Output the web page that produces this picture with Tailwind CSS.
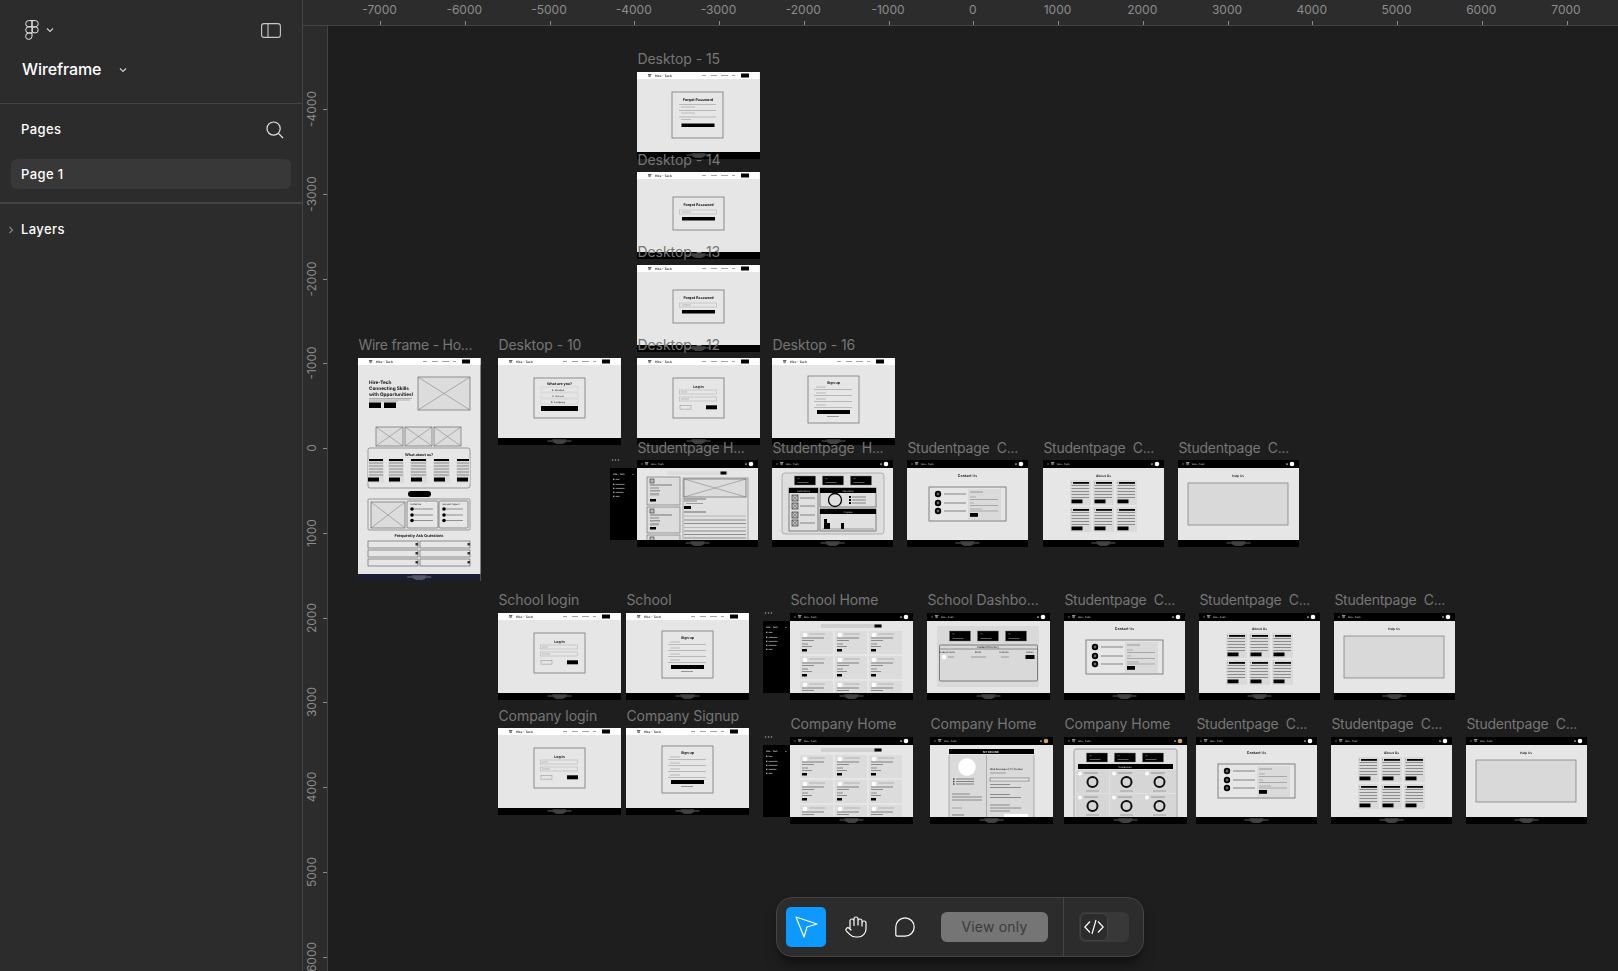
<!DOCTYPE html>
<html lang="en">
<head>
    <meta charset="UTF-8">
    <meta name="viewport" content="width=device-width, initial-scale=1.0">
    <title>Wireframe - Figma</title>
    <script src="https://cdn.jsdelivr.net/npm/@tailwindcss/browser@4"></script>
</head>
<body class="bg-[#1e1e1e]">
<div class="relative flex h-[971px] w-[1618px] overflow-hidden bg-[#1e1e1e] font-['Inter',sans-serif] text-white">

  <!-- left panel -->
  <aside class="flex h-full w-[303px] shrink-0 flex-col border-r border-[#444444] bg-[#2c2c2c]">
    <div class="h-[104px] shrink-0 border-b border-[#444444] pl-[22px]">
      <div class="flex h-[60px] items-center pr-[21px]">
        <svg class="ml-[3px] h-5 w-[14px]" viewBox="0 0 14 20" fill="none" stroke="#e6e6e6" stroke-width="1">
          <path d="M7 .6H3.8a3.1 3.1 0 0 0 0 6.2H7z"/>
          <path d="M7 .6h3.2a3.1 3.1 0 0 1 0 6.2H7z"/>
          <path d="M7 6.8H3.8a3.1 3.1 0 0 0 0 6.2H7z"/>
          <circle cx="10.1" cy="9.9" r="3.1"/>
          <path d="M7 13H3.8A3.2 3.2 0 1 0 7 16.2z"/>
        </svg>
        <svg class="ml-[7px] h-2 w-2" viewBox="0 0 8 8" fill="none" stroke="#d0d0d0" stroke-width="1.1"><path d="M1 2.5 4 5.5 7 2.5"/></svg>
        <svg class="ml-auto h-[15px] w-5" viewBox="0 0 20 15" fill="none" stroke="#c8c8c8" stroke-width="1.1"><rect x=".6" y=".6" width="18.8" height="13.8" rx="2.5"/><path d="M7 .6v13.8"/></svg>
      </div>
      <div class="flex items-center">
        <span class="text-base/[19px] font-medium tracking-[-0.1px]">Wireframe</span>
        <svg class="ml-[18px] h-2 w-2" viewBox="0 0 8 8" fill="none" stroke="#d0d0d0" stroke-width="1.1"><path d="M1 2.5 4 5.5 7 2.5"/></svg>
      </div>
    </div>
    <div class="h-[100px] shrink-0 border-b-2 border-[#444444] px-[11px]">
      <div class="flex h-[50px] items-center justify-between pl-[10px] pr-[7px] pt-[2px]">
        <span class="text-[13px] font-medium tracking-[0.4px]">Pages</span>
        <svg class="h-[18px] w-[18px]" viewBox="0 0 18 18" fill="none" stroke="#e6e6e6" stroke-width="1.2"><circle cx="7.6" cy="7.6" r="6.6"/><path d="M12.4 12.4 17 17"/></svg>
      </div>
      <div class="mt-[5px] flex h-[30px] items-center rounded-md bg-[#383838] pl-[10px] pt-[2px] text-[13px] font-medium tracking-[0.4px]">Page 1</div>
    </div>
    <div class="flex h-[50px] items-center pt-[2px]">
      <svg class="ml-2 h-2 w-[6px]" viewBox="0 0 6 8" fill="none" stroke="#8a8a8a" stroke-width="1.1"><path d="M1.5 1 4.5 4 1.5 7"/></svg>
      <span class="ml-[7px] text-[13px] font-medium tracking-[0.4px]">Layers</span>
    </div>
  </aside>

  <!-- rulers + canvas -->
  <main class="flex min-w-0 flex-1 flex-col">
    <div id="rulerTop" class="relative h-[26px] shrink-0 border-b border-[#444444] bg-[#2c2c2c]"></div>
    <div class="flex min-h-0 flex-1">
      <div id="rulerLeft" class="relative w-[25px] shrink-0 border-r border-[#444444] bg-[#2c2c2c]"></div>
      <div id="canvas" class="relative flex-1 bg-[#1e1e1e]"></div>
    </div>
  </main>

  <!-- bottom toolbar -->
  <div class="absolute left-[776px] top-[897px] flex h-[60px] w-[368px] items-center rounded-[16px] border border-[#454545] bg-[#2c2c2c] pl-[9px] shadow-lg shadow-black/40">
    <div class="flex h-10 w-10 items-center justify-center rounded-[5px] bg-[#0d99ff]">
      <svg class="h-10 w-10" viewBox="0 0 40 40" fill="none" stroke="#fff" stroke-width="1.2" stroke-linejoin="round"><path d="M10 10 31 17 21 20 18 30z"/></svg>
    </div>
    <svg class="ml-[18px] h-6 w-6" viewBox="0 0 24 24" fill="none" stroke="#fff" stroke-width="1.2" stroke-linecap="round" stroke-linejoin="round"><path d="M18 11V6a2 2 0 0 0-2-2 2 2 0 0 0-2 2M14 10V4a2 2 0 0 0-2-2 2 2 0 0 0-2 2v2M10 10.5V6a2 2 0 0 0-2-2 2 2 0 0 0-2 2v8M18 8a2 2 0 1 1 4 0v6a8 8 0 0 1-8 8h-2c-2.8 0-4.5-.86-5.99-2.34l-3.6-3.6a2 2 0 0 1 2.83-2.82L7 15"/></svg>
    <svg class="ml-[27px] h-5 w-5" viewBox="0 0 20 20" fill="none" stroke="#fff" stroke-width="1.2"><path d="M.8 10a9.2 9.2 0 1 1 9.2 9.2H2.3a1.5 1.5 0 0 1-1.5-1.5z"/></svg>
    <div class="ml-[26px] flex h-[30px] w-[107px] items-center justify-center rounded-md bg-[#757575] text-sm tracking-[0.2px] text-[#3b3b3b]">View only</div>
    <div class="ml-[15px] h-full w-px bg-[#444444]"></div>
    <div class="ml-[15px] flex h-[30px] w-[50px] items-center rounded-md bg-[#383838] pl-px">
      <div class="flex h-[28px] w-[28px] items-center justify-center rounded-md border border-[#444444] bg-[#2c2c2c]">
        <svg class="h-4 w-5" viewBox="0 0 20 16" fill="none" stroke="#fff" stroke-width="1.2"><path d="M6 2.5.8 8 6 13.5M12 1 8 15M14 2.5 19.2 8 14 13.5"/></svg>
      </div>
    </div>
  </div>
</div>

<script>
  // ruler ticks, 84.75px per 1000 units
  const rulerTop = document.getElementById('rulerTop');
  const rulerLeft = document.getElementById('rulerLeft');
  const canvas = document.getElementById('canvas');
  const OX = 303 + 25, OY = 26;

  for (let i = -7; i <= 7; i++) {
    const x = 380 + (i + 7) * 84.75 - 303;
    rulerTop.innerHTML += `<span class="absolute top-[2px] w-12 -translate-x-1/2 text-center text-xs/[15px] text-[#8c8c8c]" style="left:${x - 0.5}px">${i * 1000}</span>
      <span class="absolute bottom-0 h-[4px] w-px bg-[#8c8c8c]" style="left:${x}px"></span>`;
  }
  for (let i = -4; i <= 6; i++) {
    const y = 109 + (i + 4) * 84.75 - 26;
    rulerLeft.innerHTML += `<span class="absolute left-0 w-[18px] -translate-y-1/2 text-center text-xs/[18px] text-[#8c8c8c] [writing-mode:vertical-rl] rotate-180" style="top:${y}px">${i * 1000}</span>
      <span class="absolute right-0 h-px w-[4px] bg-[#8c8c8c]" style="top:${y}px"></span>`;
  }

  // svg bits for the small frame previews
  const r = (x, y, w, h, f = '#000', rx = 0) => `<rect x="${x}" y="${y}" width="${w}" height="${h}" fill="${f}" rx="${rx}"/>`;
  const box = (x, y, w, h, f = '#e0e0e0', s = '#777', rx = 0, sw = .7) => `<rect x="${x}" y="${y}" width="${w}" height="${h}" fill="${f}" stroke="${s}" stroke-width="${sw}" rx="${rx}"/>`;
  const t = (x, y, s, size = 2.6, a = 'middle', f = '#111', w = 600) => `<text x="${x}" y="${y}" font-family="Inter" font-size="${size}" font-weight="${w}" text-anchor="${a}" fill="${f}" text-rendering="geometricPrecision">${s}</text>`;
  const ln = (x1, y1, x2, y2, c = '#666', w = .6) => `<line x1="${x1}" y1="${y1}" x2="${x2}" y2="${y2}" stroke="${c}" stroke-width="${w}"/>`;
  const cross = (x, y, w, h) => box(x, y, w, h, '#dcdcdc', '#6a6a6a') + ln(x, y, x + w, y + h, '#777', .5) + ln(x + w, y, x, y + h, '#777', .5);
  const circ = (x, y, rad, f = '#000', s = 'none', sw = 0) => `<circle cx="${x}" cy="${y}" r="${rad}" fill="${f}" stroke="${s}" stroke-width="${sw}"/>`;

  const logo = (x, c) => r(x, 2.2, 3.4, .7, c) + r(x + .6, 3, .5, 1.8, c) + r(x + 1.4, 3, .5, 2.2, c) + r(x + 2.2, 3, .5, 1.8, c);
  const foot = (w, y = 80, h = 7, c = '#000') => r(0, y, w, h, c) + ln(w / 2 - 12, y + 3, w / 2 + 12, y + 3, '#eee', .4) + ln(w / 2 - 7, y + 1.8, w / 2 + 7, y + 1.8, '#ccc', .35) + ln(w / 2 - 6, y + 4.2, w / 2 + 6, y + 4.2, '#ddd', .4) + ln(w / 2 - 4, y + 5.4, w / 2 + 4, y + 5.4, '#ccc', .35);
  const navL = () => r(0, 0, 122.5, 7, '#fff') + logo(11, '#222') + t(18, 4.7, 'Hire - Tech', 3.2, 'start')
    + ln(65, 3.5, 69, 3.5) + ln(74, 3.5, 80, 3.5) + ln(84, 3.5, 91, 3.5) + ln(95, 3.5, 98, 3.5) + r(104, 1.5, 8, 4, '#000');
  const navD = (w, face = '#fff') => r(0, 0, w, 8, '#000') + ln(4, 4, 6, 4, '#ccc', .5) + logo(8, '#ccc') + t(14, 4.9, 'Hire - Tech', 2.4, 'start', '#ccc', 500)
    + ln(w - 12, 3.2, w - 12, 5, '#ccc', 1.2) + circ(w - 7, 4, 2.3, face);
  const base = (w, h = 87) => r(0, 0, w, h, '#e6e6e6');

  const dialog = (x, y, w, h) => box(x, y, w, h, '#e6e6e6', '#777', 0, .8);
  const forgot15 = () => base(123) + navL() + dialog(35, 20, 51, 46) + t(61, 28.5, 'Forgot Password', 3.7, 'middle', '#111', 700)
    + ln(42, 32.5, 79, 32.5, '#999') + ln(44, 35, 58, 35, '#777', .4) + ln(42, 38.5, 79, 38.5, '#999') + ln(44, 41, 58, 41, '#777', .4) + ln(42, 45, 79, 45, '#999') + ln(44, 47.5, 54, 47.5, '#777', .4) + r(44.5, 51.5, 33, 3.5) + foot(123);
  const forgot1 = () => base(123) + navL() + dialog(36, 25, 51, 33) + t(61.5, 33.5, 'Forgot Password', 3.7, 'middle', '#111', 700)
    + box(42.5, 38, 37, 4, '#e6e6e6', '#aaa', 0, .5) + ln(45, 40, 54, 40, '#777', .4) + r(45, 45, 33, 3.5) + foot(123);
  const login = () => base(123) + navL() + dialog(36, 20, 51, 40) + t(61.5, 30.3, 'Log In', 3.6, 'middle', '#111', 700)
    + box(42.5, 32, 37, 4, '#e6e6e6', '#aaa', 0, .5) + ln(44, 34, 50, 34, '#777', .4) + box(42.5, 39, 37, 4, '#e6e6e6', '#aaa', 0, .5) + ln(44, 41, 52, 41, '#777', .4)
    + box(43, 47.5, 11, 3.6, '#e6e6e6', '#777', 0, .4) + r(69, 47.3, 11, 4) + foot(123);
  const signup = () => base(123) + navL() + dialog(36, 18, 51, 47) + t(61.5, 25.8, 'Sign up', 3.6, 'middle', '#111', 700)
    + [28, 34, 40, 46].map(y => ln(42, y + 3.5, 80, y + 3.5, '#999') + ln(44, y + 1, 54, y + 1, '#777', .4)).join('')
    + r(45, 52, 33, 4) + ln(55, 58.5, 67, 58.5, '#444', .5) + foot(123);
  const what = () => base(123) + navL() + dialog(36, 20, 51, 40) + t(61.5, 26.7, 'What are you?', 3.6, 'middle', '#111', 700)
    + [29, 35, 41].map((y, i) => box(43, y, 37, 5, '#e6e6e6', '#bbb', 0, .3) + t(60, y + 3.5, ['A. Student', 'C. School', 'D. Company'][i], 2.5, 'middle', '#222', 500)).join('')
    + r(43, 48, 37, 5) + foot(123);

  const home = () => {
    let s = r(0, 0, 122.5, 223, '#e6e6e6') + navL() + t(11, 26, 'Hire-Tech', 4.7, 'start', '#111', 700) + t(11, 32, 'Connecting Skills', 4.7, 'start', '#111', 700) + t(11, 38, 'with Opportunities!', 4.7, 'start', '#111', 700)
      + ln(11, 40.5, 54, 40.5, '#777', .5) + ln(11, 42, 52, 42, '#777', .5) + ln(11, 43.3, 40, 43.3, '#888', .4) + r(11, 44.5, 12, 5.5) + r(26, 44.5, 12, 5.5)
      + cross(60, 19, 52, 33) + cross(18, 69, 27, 19) + cross(47, 69, 27, 19) + cross(76, 69, 27, 19) + box(10, 90, 102, 40, '#e6e6e6', '#777', 2) + t(61, 97.5, 'What about us?', 3.7, 'middle', '#111', 700);
    [[10, 16], [30, 16], [52, 17], [75, 17], [98, 14]].forEach(([x, w]) => {
      s += r(x, 101, w, 24, '#dcdcdc') + r(x + 1, 101, w - 2, 2);
      [105, 108, 111, 114, 117].forEach(y => s += ln(x + 1, y, x + w - 1, y, '#555', .6));
      s += r(x + (x == 10 ? 0 : 1), 119.5, 11, 4);
    });
    s += r(50, 133, 23, 6, '#000', 3) + box(10, 141, 102, 31, '#e6e6e6', '#777', 1) + cross(13, 144, 34, 26);
    [[49, 31, 'Contact Us'], [81, 29, 'Help and Support']].forEach(([x, w, l]) => {
      s += box(x, 143, w, 27, '#e6e6e6', '#666', 1) + t(x + 3, 147, l, 2.1, 'start', '#222', 500);
      [151, 157, 162.5].forEach(y => s += circ(x + 5, y, 1.8) + ln(x + 7, y, x + w - 5, y, '#555', .6));
    });
    s += t(61, 178.8, 'Frequently Ask Questions', 3.9, 'middle', '#111', 700);
    [183, 192, 201].forEach(y => [[10, 50], [62, 50]].forEach(([x, w]) => s += box(x, y, w, 7, '#e6e6e6', '#666') + r(x + w - 2.5, y + 2, 2.5, 2.5, '#333')));
    return s + foot(122.5, 216, 7, '#1c1e33');
  };

  const studentFeed = () => {
    let s = base(121) + navD(121) + box(30, 11, 61, 4, '#dcdcdc', 'none', 0, 0) + r(83.5, 11.5, 6, 3);
    [[10, 17, 28], [10, 47, 26], [10, 75, 8]].forEach(([x, y, h]) => {
      s += box(x, y, 33, h, '#dcdcdc', '#777') + box(x + 3, y + 2, 4, 4, '#bbb', '#333', 0, .6);
      if (h > 10) {
        s += ln(x + 3, y + 8, x + 25, y + 8, '#333', .6) + ln(x + 3, y + 11, x + 12, y + 11, '#555', .6) + r(x + 3, y + 13, 10, 1.5, '#999') + r(x + 3, y + 16, 9, 2.5, '#aaa') + r(x + 3, y + h - 6, 6, 2.5);
      }
    });
    s += box(46, 18, 65, 63, '#e0e0e0', '#888') + cross(47, 19, 62, 18) + ln(47, 39, 69, 39, '#555', .8) + ln(47, 41, 60, 41, '#555', .6) + ln(49, 43.5, 66, 43.5, '#555', .5) + r(47, 46, 7, 3) + ln(47, 52, 69, 52, '#333', .7);
    [56, 60, 63.5, 67.5, 71, 74.5, 78].forEach(y => s += ln(47, y, 109, y, y == 56 || y == 67.5 ? '#999' : '#555', .6));
    return s + foot(121);
  };
  const qr = (x, y) => box(x, y, 6, 6, '#bbb', '#333', 0, .7) + ln(x, y, x + 6, y + 6, '#444', .4) + ln(x + 6, y, x, y + 6, '#444', .4);
  const chips = (y, h) => [22.5, 50.5, 78.5].map(x => box(x, y, 21, h, '#000', '#777', 0, .4) + r(x + 3, y + 2.5, 2, .6, '#888') + r(x + 3, y + h - 3, 11, .6, '#999')).join('');
  const studentDash = () => {
    let s = base(121) + navD(121) + box(10, 13, 102, 61, '#dedede', '#999', 3) + chips(16, 9);
    s += box(17, 28, 29, 43, '#e0e0e0', '#555') + r(17, 28, 29, 5) + t(31.5, 31.5, 'Notifications', 2.1, 'middle', '#bbb', 500);
    [35, 43, 52, 60].forEach(y => s += qr(20, y) + ln(28, y + 3, 43, y + 3, '#444', .6));
    s += box(48, 28, 56, 19, '#e0e0e0', '#555') + r(48, 28, 56, 5) + t(76, 31.5, 'Attendance', 2.1, 'middle', '#bbb', 500) + circ(63, 40, 6.5, 'none', '#000', 1.3);
    [37, 40, 43].forEach(y => s += r(77, y - 1, 2, 2) + ln(80, y, 94, y, '#444', .6));
    s += box(48, 49, 56, 22, '#e0e0e0', '#555') + r(48, 49, 56, 5) + t(76, 52.5, 'Progress', 2.1, 'middle', '#bbb', 500)
      + r(52, 59, 3, 10) + r(55, 63, 3, 6) + r(69, 63, 3, 6) + ln(50, 69, 102, 69, '#555', .5);
    return s + foot(121);
  };
  const contact = () => {
    let s = base(121) + navD(121) + t(60.5, 17, 'Contact Us', 3.6) + box(22, 27, 77, 34, '#e6e6e6', '#777', 0, .9) + r(61, 29, 33, 31, '#dadada');
    [34, 43, 51].forEach(y => s += circ(31, y, 3.2) + circ(31, y, 1.4, '#666') + ln(37, y, 59, y, '#444', .6));
    s += ln(63, 32, 76, 32, '#555', .5) + ln(63, 37, 69, 37, '#666', .4) + ln(63, 39.5, 91, 39.5, '#777', .5) + ln(63, 43, 67, 43, '#666', .4) + ln(63, 45.5, 91, 45.5, '#777', .5) + ln(63, 49, 75, 49, '#666', .4) + ln(63, 51, 91, 51, '#777', .5) + r(63, 53, 8, 3.8);
    return s + foot(121);
  };
  const about = () => {
    let s = base(121) + navD(121) + t(60.5, 17, 'About Us', 3.4);
    [20, 47].forEach(y => [27, 50, 73].forEach(x => {
      s += r(x, y, 21, 25, '#dadada') + r(x + 3, y + 2, 16, 1.8) + ln(x + 1, y + 2.8, x + 2, y + 2.8, '#333', .5);
      [5.5, 8.5, 11.5, 14.5, 17.5].forEach(d => s += ln(x + 1.5, y + d, x + 19, y + d, '#555', .6));
      s += r(x + 1.5, y + 19.5, 11, 3.8);
    }));
    return s + foot(121);
  };
  const help = () => base(121) + navD(121) + t(60, 17, 'Help Us', 3.2) + box(10, 23, 100, 42, '#d9d9d9', '#777', 0, .7) + foot(121);

  const orgHome = () => {
    let s = base(123) + navD(123) + r(31, 11, 61, 4, '#d0d0d0') + r(84.5, 11.5, 7, 3);
    [18, 43, 68].forEach(y => [[10, 33], [45, 32], [79, 33]].forEach(([x, w]) => {
      s += r(x, y, w, 23, '#dcdcdc') + circ(x + 5, y + 4, 2.3, '#fff') + ln(x + 9, y + 3, x + 25, y + 3, '#888', .5) + ln(x + 2, y + 7, x + 24, y + 7, '#444', .6)
        + ln(x + 2, y + 9.5, x + 14, y + 9.5, '#555', .6) + ln(x + 2, y + 13, x + 8, y + 13, '#555', .6) + ln(x + 2, y + 15.5, x + 12, y + 15.5, '#555', .6) + r(x + 2, y + 18, 5, 2.5);
    }));
    return s + foot(123);
  };
  const schoolDash = () => {
    let s = base(123) + navD(123) + r(10, 13, 102, 61, '#d9d9d9', 1) + chips(18, 10) + box(12.5, 32, 98, 36, '#d9d9d9', '#555', 1);
    s += ln(12.5, 36, 110.5, 36, '#555', .6) + t(61, 35.3, 'Student Directory', 2.6, 'middle', '#222', 500);
    [[20, 'Student name'], [51, 'Email'], [77, 'Institute'], [103, 'Action']].forEach(([x, l]) => s += t(x, 40, l, 2.4, 'middle', '#333', 500));
    s += circ(17, 44, 2.3, '#fff') + ln(21, 44, 27, 44, '#555', .5) + ln(44, 44, 59, 44, '#555', .5) + ln(74, 44, 82, 44, '#555', .5) + r(98.5, 42, 9, 4);
    return s + foot(123);
  };
  const resume = () => {
    let s = base(123) + navD(123, '#d0a060') + r(19, 12, 85, 5) + t(61, 15.7, 'MY RESUME', 2.6, 'middle', '#ddd', 700) + r(19, 18, 37, 62, '#dadada') + r(57, 18, 47, 62, '#dadada') + ln(56.5, 18, 56.5, 80, '#777', .5) + ln(19, 18, 19, 80, '#888', .6) + ln(104, 18, 104, 80, '#888', .6) + circ(37, 30, 8.7, '#fff');
    [42, 44.5, 47].forEach(y => s += r(23, y - .7, 1.5, 1.5, '#444') + ln(26, y, 44, y, '#444', .6));
    [58, 61, 64].forEach((y, i) => s += ln(22, y - 1, i ? 52 : 40, y - 1, '#555', .6));
    s += ln(22, 71, 32, 71, '#666', .5) + ln(22, 78, 34, 78, '#444', .6);
    s += t(60, 32.5, 'Web Developer | IT | Fresher', 2.4, 'start', '#222', 600) + ln(60, 36, 76, 36, '#555', .5) + box(60, 41, 39, 3, '#e6e6e6', '#555', 0, .5);
    [[47.5, 20], [50.5, 31], [57.5, 20], [60.5, 31], [68, 20], [71, 31], [74, 20]].forEach(([y, w]) => s += ln(60, y, 60 + w, y, '#555', .6));
    s += r(74, 77, 24, 3, '#fff');
    return s + foot(123);
  };
  const companyDash = () => {
    let s = base(123) + navD(123, '#d0a060') + box(10, 12, 103, 70, '#e0e0e0', '#888', 2) + chips(16, 9) + r(14, 27, 95, 5) + t(61, 30.7, 'Companies', 2.4, 'middle', '#ccc', 500);
    [33, 57].forEach(y => [12, 46, 79].forEach(x => {
      s += r(x, y, 33, 23, '#d6d6d6') + circ(x + 4, y + 3.5, 2, '#fff') + ln(x + 8, y + 3, x + 22, y + 3, '#666', .6) + circ(x + 16.5, y + 12, 5, 'none', '#111', 2) + ln(x + 10, y + 21, x + 23, y + 21, '#666', .5);
    }));
    return s + foot(123);
  };
  const side = () => {
    let s = circ(2.5, 2, .8, '#999') + circ(5.5, 2, .8, '#999') + circ(8.5, 2, .8, '#999') + r(0, 10, 27, 72);
    s += t(3, 17, 'Hire - Tech', 2.2, 'start', '#ddd', 600) + ln(22, 16.4, 24, 16.4, '#bbb', .5);
    [22, 27, 31, 35, 39].forEach((y, i) => s += r(3, y - 1.3, 1.4, 1.4, '#aaa') + ln(5.5, y - .6, 5.5 + [4, 9, 9, 8, 4][i], y - .6, '#bbb', .7));
    return s;
  };

  // [label, x, y, width, height, drawing, label centre y]
  const frames = [
    ['Wire frame - Ho...', 358, 358, 122.5, 223, home, 345],
    ['Desktop - 10', 498, 358, 122.5, 87, what, 345],
    ['Desktop - 15', 637, 72, 122.5, 87, forgot15, 59],
    ['Desktop - 14', 637, 172, 122.5, 87, forgot1, 160],
    ['Desktop - 13', 637, 265, 122.5, 87, forgot1, 252],
    ['Desktop - 12', 637, 358, 122.5, 87, login, 345],
    ['Desktop - 16', 772, 358, 122.5, 87, signup, 345],
    [null, 610, 458, 27, 82, side],
    ['Studentpage H...', 637, 460, 121, 87, studentFeed, 448],
    ['Studentpage  H...', 772, 460, 121, 87, studentDash, 448],
    ['Studentpage  C...', 907, 460, 121, 87, contact, 448],
    ['Studentpage  C...', 1043, 460, 121, 87, about, 448],
    ['Studentpage  C...', 1178, 460, 121, 87, help, 448],
    ['School login', 498, 613, 122.5, 87, login, 600],
    ['School', 626, 613, 122.5, 87, signup, 600],
    [null, 763, 611, 27, 82, side],
    ['School Home', 790, 613, 123, 87, orgHome, 600],
    ['School Dashbo...', 927, 613, 123, 87, schoolDash, 600],
    ['Studentpage  C...', 1064, 613, 121, 87, contact, 600],
    ['Studentpage  C...', 1199, 613, 121, 87, about, 600],
    ['Studentpage  C...', 1334, 613, 121, 87, help, 600],
    ['Company login', 498, 728, 122.5, 87, login, 716],
    ['Company Signup', 626, 728, 122.5, 87, signup, 716],
    [null, 763, 735, 27, 82, side],
    ['Company Home', 790, 737, 123, 87, orgHome, 724],
    ['Company Home', 930, 737, 123, 87, resume, 724],
    ['Company Home', 1064, 737, 123, 87, companyDash, 724],
    ['Studentpage  C...', 1196, 737, 121, 87, contact, 724],
    ['Studentpage  C...', 1331, 737, 121, 87, about, 724],
    ['Studentpage  C...', 1466, 737, 121, 87, help, 724],
  ];

  let html = '';
  frames.forEach(([label, x, y, w, h, draw, ly]) => {
    html += `<svg class="absolute blur-[0.4px]" style="left:${x + 0.4 - OX}px;top:${y + 0.4 - OY}px;width:${w}px;height:${h}px" viewBox="0 0 ${w} ${h}">${draw()}</svg>`;
    if (label) {
      // "Studentpage" and "Wire frame" run a little tighter than the others
      const tight = /^(Student|Wire)/.test(label);
      html += `<span class="absolute -translate-y-1/2 whitespace-pre text-sm/[18px] text-[#767676] ${tight ? 'tracking-[-0.25px]' : 'tracking-[-0.05px]'}" style="left:${x + 0.4 - OX}px;top:${ly - OY}px">${label}</span>`;
    }
  });
  canvas.innerHTML = html;
</script>
</body>
</html>
